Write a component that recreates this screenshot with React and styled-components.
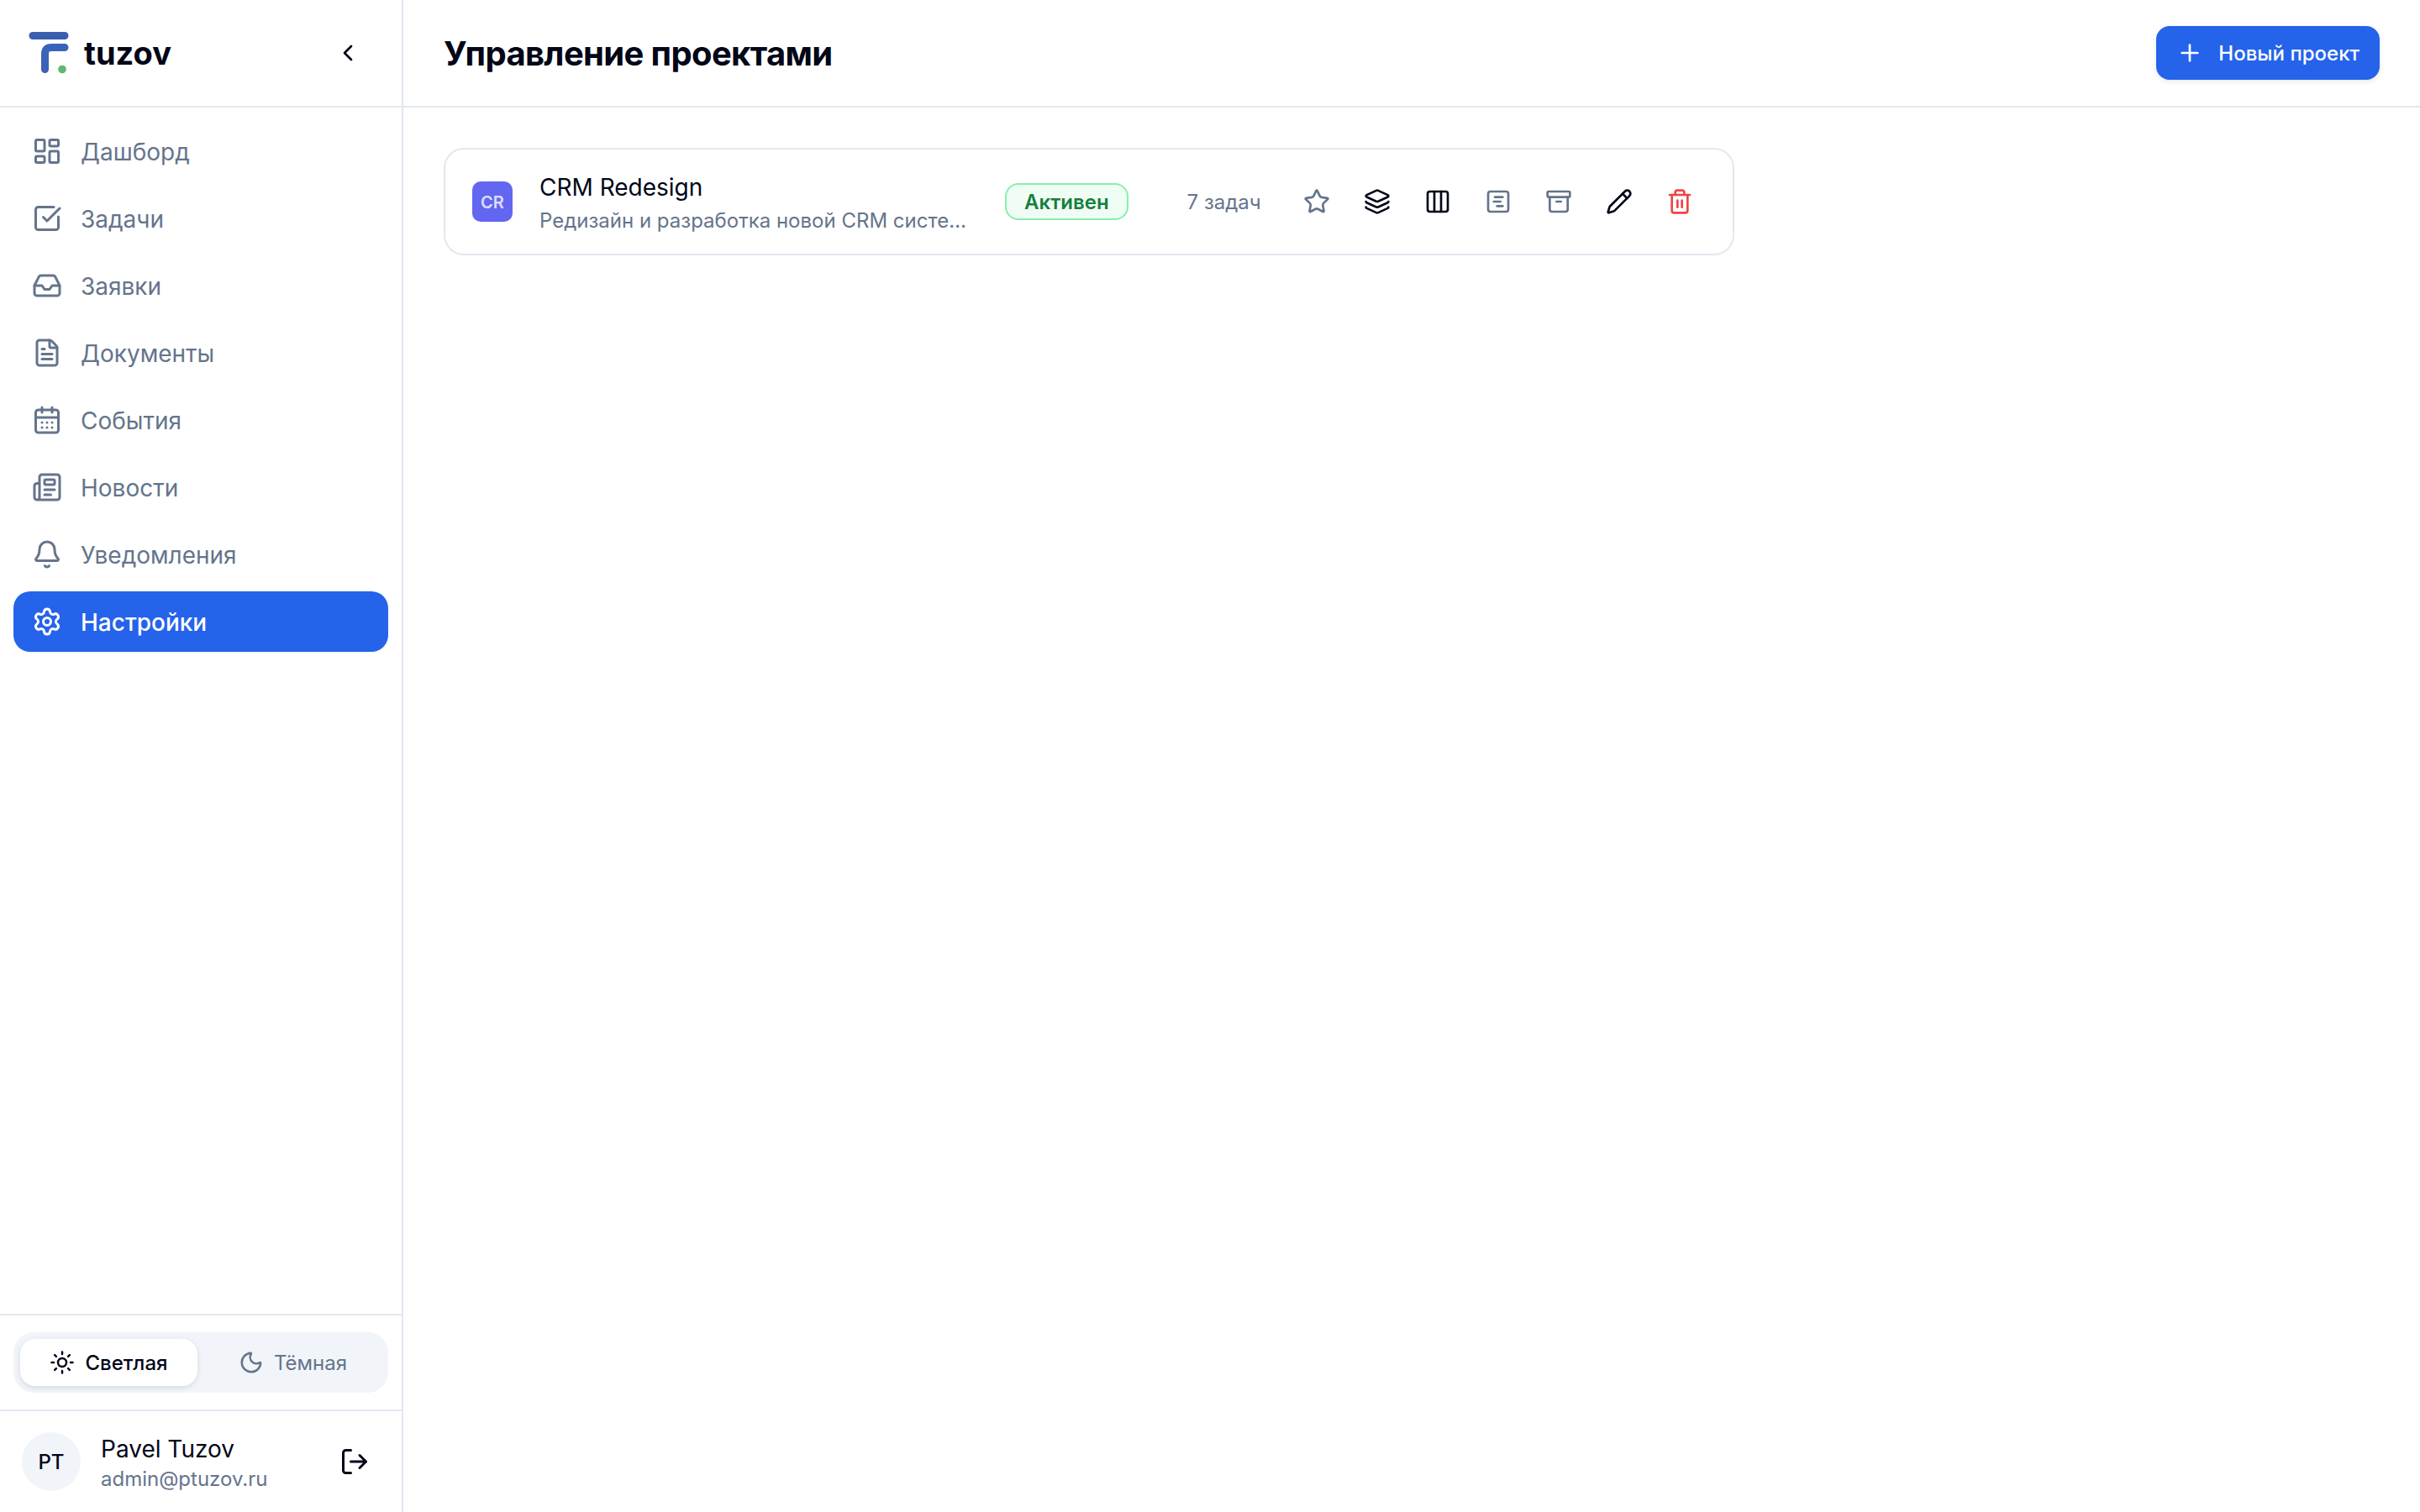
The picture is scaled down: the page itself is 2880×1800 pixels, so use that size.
import React from 'react'
import styled, { createGlobalStyle } from 'styled-components'
import {
    LayoutDashboard, SquareCheckBig, Inbox, FileText, CalendarDays, Newspaper, Bell, Settings,
    Star, Layers, Columns3, SquareChartGantt, Archive, Pencil, Trash2,
    Sun, Moon, LogOut, ChevronLeft, Plus,
} from 'lucide-react'

const GlobalStyle = createGlobalStyle`
    * { box-sizing: border-box; }
    html, body { margin: 0; height: 100%; }
    body {
        background: #fff;
        color: #020617;
        font-family: Inter, "Liberation Sans", sans-serif;
        font-optical-sizing: none;
    }
`

const Layout = styled.div`
    display: flex;
    height: 100vh;
`

const Sidebar = styled.aside`
    width: 480px;
    flex-shrink: 0;
    display: flex;
    flex-direction: column;
    border-right: 2px solid #e2e8f0;
`

const SidebarHeader = styled.div`
    height: 128px;
    flex-shrink: 0;
    display: flex;
    align-items: center;
    justify-content: space-between;
    padding: 0 48px 0 34px;
    border-bottom: 2px solid #e2e8f0;
`

const Brand = styled.div`
    display: flex;
    align-items: center;
    gap: 18px;
`

const BrandName = styled.span`
    font-size: 38px;
    font-weight: 700;
    line-height: 1;
`

const Nav = styled.nav`
    flex: 1;
    display: flex;
    flex-direction: column;
    gap: 8px;
    padding: 16px;
`

const NavItem = styled.a`
    height: 72px;
    display: flex;
    align-items: center;
    gap: 22px;
    padding: 0 22px;
    border-radius: 20px;
    font-size: 28px;
    font-weight: ${p => p.$active ? 500 : 400};
    color: ${p => p.$active ? '#fff' : '#64748b'};
    background: ${p => p.$active ? '#2563eb' : 'transparent'};
`

const NavLabel = styled.span`
    padding-top: 1px;
`

const ThemeSection = styled.div`
    padding: 20px 16px;
    border-top: 2px solid #e2e8f0;
    border-bottom: 2px solid #e2e8f0;
`

const ThemeSwitch = styled.div`
    height: 72px;
    display: flex;
    gap: 8px;
    padding: 8px;
    border-radius: 24px;
    background: #f1f5f9;
`

const ThemeOption = styled.div`
    flex: 1;
    display: flex;
    align-items: center;
    justify-content: center;
    gap: 12px;
    border-radius: 18px;
    font-size: 24px;
    font-weight: ${p => p.$active ? 500 : 400};
    color: ${p => p.$active ? '#020617' : '#64748b'};
    background: ${p => p.$active ? '#fff' : 'transparent'};
    box-shadow: ${p => p.$active ? '0 2px 6px rgba(15, 23, 42, 0.12)' : 'none'};
`

const UserRow = styled.div`
    height: 120px;
    flex-shrink: 0;
    display: flex;
    align-items: center;
    padding: 0 38px 0 26px;
`

const UserAvatar = styled.div`
    width: 70px;
    height: 70px;
    flex-shrink: 0;
    display: flex;
    align-items: center;
    justify-content: center;
    border-radius: 50%;
    background: #f1f5f9;
    font-size: 24px;
    font-weight: 500;
`

const UserInfo = styled.div`
    flex: 1;
    display: flex;
    flex-direction: column;
    gap: 2px;
    margin-left: 24px;
    padding-top: 3px;
`

const UserName = styled.div`
    font-size: 28px;
    font-weight: 400;
    line-height: 36px;
`

const UserEmail = styled.div`
    font-size: 24px;
    line-height: 32px;
    color: #64748b;
`

const Main = styled.main`
    flex: 1;
    min-width: 0;
    display: flex;
    flex-direction: column;
`

const Topbar = styled.header`
    height: 128px;
    flex-shrink: 0;
    display: flex;
    align-items: center;
    justify-content: space-between;
    padding: 0 48px;
    border-bottom: 2px solid #e2e8f0;
`

const PageTitle = styled.h1`
    margin: 0;
    font-size: 40px;
    font-weight: 700;
    letter-spacing: -0.65px;
`

const NewButton = styled.button`
    height: 64px;
    display: flex;
    align-items: center;
    gap: 18px;
    padding: 0 24px;
    border: none;
    border-radius: 16px;
    background: #2563eb;
    color: #fff;
    font: inherit;
    font-size: 24px;
    font-weight: 500;
    box-shadow: 0 2px 6px rgba(15, 23, 42, 0.1);
`

const Content = styled.div`
    padding: 48px;
`

const ProjectCard = styled.div`
    width: 1536px;
    height: 128px;
    display: flex;
    align-items: center;
    padding: 0 32px;
    border: 2px solid #e2e8f0;
    border-radius: 24px;
`

const ProjectIcon = styled.div`
    width: 48px;
    height: 48px;
    flex-shrink: 0;
    display: flex;
    align-items: center;
    justify-content: center;
    padding-top: 2px;
    border-radius: 10px;
    background: #6366f1;
    color: rgba(255, 255, 255, 0.8);
    font-size: 20px;
    font-weight: 600;
`

const ProjectText = styled.div`
    width: 510px;
    margin-left: 32px;
    padding-top: 3px;
    display: flex;
    flex-direction: column;
    gap: 4px;
`

const ProjectName = styled.div`
    font-size: 28px;
    font-weight: 400;
    line-height: 38px;
`

const ProjectDesc = styled.div`
    font-size: 24px;
    line-height: 34px;
    color: #64748b;
    white-space: nowrap;
    overflow: hidden;
    text-overflow: ellipsis;
`

const StatusBadge = styled.div`
    height: 44px;
    margin-left: 44px;
    display: flex;
    align-items: center;
    padding: 0 21px;
    border: 2px solid #86efac;
    border-radius: 16px;
    background: #f0fdf4;
    color: #15803d;
    font-size: 24px;
    font-weight: 600;
`

const TaskCount = styled.div`
    margin-left: 70px;
    font-size: 24px;
    color: #64748b;
    white-space: nowrap;
`

const Actions = styled.div`
    display: flex;
    align-items: center;
    gap: 24px;
    margin-left: 42px;
`

const ActionButton = styled.button`
    width: 48px;
    height: 48px;
    display: flex;
    align-items: center;
    justify-content: center;
    padding: 0;
    border: none;
    background: transparent;
    color: ${p => p.$color};
`

const IconButton = styled.button`
    display: flex;
    padding: 0;
    border: none;
    background: transparent;
    color: #020617;
`

const navItems = [
    { label: 'Дашборд', icon: LayoutDashboard },
    { label: 'Задачи', icon: SquareCheckBig },
    { label: 'Заявки', icon: Inbox },
    { label: 'Документы', icon: FileText },
    { label: 'События', icon: CalendarDays },
    { label: 'Новости', icon: Newspaper },
    { label: 'Уведомления', icon: Bell },
    { label: 'Настройки', icon: Settings, active: true },
]

const actions = [
    { icon: Star, color: '#64748b' },
    { icon: Layers, color: '#020617' },
    { icon: Columns3, color: '#020617' },
    { icon: SquareChartGantt, color: '#64748b' },
    { icon: Archive, color: '#64748b' },
    { icon: Pencil, color: '#020617' },
    { icon: Trash2, color: '#ef4444' },
]

function Logo() {
    return (
        <svg width="48" height="50" viewBox="0 0 48 50" fill="none">
            <rect x="0.5" y="0" width="47" height="9" rx="4.5" fill="#3a5fae" />
            <path d="M43 18.5H27.5C22 18.5 19.5 21 19.5 26.5V44.5" stroke="#3a62b8" strokeWidth="9" strokeLinecap="round" />
            <circle cx="40" cy="44.5" r="4.8" fill="#5cb96f" />
        </svg>
    )
}

export default function App() {
    return (
        <Layout>
            <GlobalStyle />
            <Sidebar>
                <SidebarHeader>
                    <Brand>
                        <Logo />
                        <BrandName>tuzov</BrandName>
                    </Brand>
                    <IconButton><ChevronLeft size={32} /></IconButton>
                </SidebarHeader>
                <Nav>
                    {navItems.map(item =>
                        <NavItem key={item.label} $active={item.active}>
                            <item.icon size={36} />
                            <NavLabel>{item.label}</NavLabel>
                        </NavItem>
                    )}
                </Nav>
                <ThemeSection>
                    <ThemeSwitch>
                        <ThemeOption $active><Sun size={30} />Светлая</ThemeOption>
                        <ThemeOption><Moon size={30} />Тёмная</ThemeOption>
                    </ThemeSwitch>
                </ThemeSection>
                <UserRow>
                    <UserAvatar>PT</UserAvatar>
                    <UserInfo>
                        <UserName>Pavel Tuzov</UserName>
                        <UserEmail>admin@ptuzov.ru</UserEmail>
                    </UserInfo>
                    <IconButton><LogOut size={36} /></IconButton>
                </UserRow>
            </Sidebar>
            <Main>
                <Topbar>
                    <PageTitle>Управление проектами</PageTitle>
                    <NewButton><Plus size={32} />Новый проект</NewButton>
                </Topbar>
                <Content>
                    <ProjectCard>
                        <ProjectIcon>CR</ProjectIcon>
                        <ProjectText>
                            <ProjectName>CRM Redesign</ProjectName>
                            <ProjectDesc>Редизайн и разработка новой CRM системы</ProjectDesc>
                        </ProjectText>
                        <StatusBadge>Активен</StatusBadge>
                        <TaskCount>7 задач</TaskCount>
                        <Actions>
                            {actions.map((action, i) =>
                                <ActionButton key={i} $color={action.color}>
                                    <action.icon size={32} />
                                </ActionButton>
                            )}
                        </Actions>
                    </ProjectCard>
                </Content>
            </Main>
        </Layout>
    )
}
